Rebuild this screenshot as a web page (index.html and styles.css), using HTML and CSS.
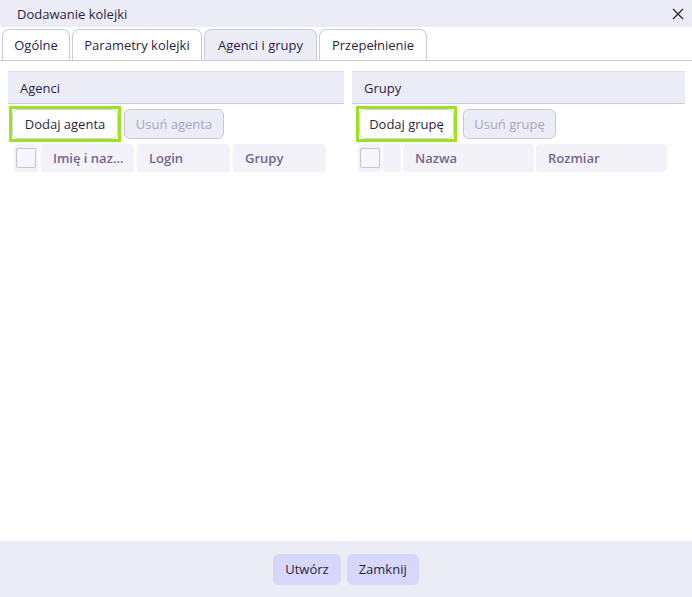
FILE: index.html
```html
<!DOCTYPE html>
<html lang="pl">
<head>
<meta charset="utf-8">
<title>Dodawanie kolejki</title>
<link rel="stylesheet" href="styles.css">
</head>
<body>
<div class="dialog">
  <div class="titlebar">
    <span class="title">Dodawanie kolejki</span>
    <svg class="close" width="12" height="12" viewBox="0 0 12 12"><path d="M1 1L11 11M11 1L1 11" stroke="#2b1f4a" stroke-width="1.3" fill="none"/></svg>
  </div>
  <div class="tabs">
    <div class="tab t1">Ogólne</div>
    <div class="tab t2">Parametry kolejki</div>
    <div class="tab t3 active">Agenci i grupy</div>
    <div class="tab t4">Przepełnienie</div>
  </div>
  <div class="content">
    <div class="panel">
      <div class="panel-header">Agenci</div>
      <div class="actions a-left">
        <span class="hl"><button class="btn primary w-agent">Dodaj agenta</button></span>
        <button class="btn disabled w-uagent">Usuń agenta</button>
      </div>
      <div class="thead left">
        <div class="cell chk"><span class="box"></span></div>
        <div class="cell">Imię i naz...</div>
        <div class="cell">Login</div>
        <div class="cell">Grupy</div>
      </div>
    </div>
    <div class="panel">
      <div class="panel-header">Grupy</div>
      <div class="actions a-right">
        <span class="hl"><button class="btn primary w-group">Dodaj grupę</button></span>
        <button class="btn disabled w-ugroup">Usuń grupę</button>
      </div>
      <div class="thead right">
        <div class="cell chk"><span class="box"></span></div>
        <div class="cell"></div>
        <div class="cell">Nazwa</div>
        <div class="cell">Rozmiar</div>
      </div>
    </div>
  </div>
  <div class="footer">
    <button class="fbtn">Utwórz</button>
    <button class="fbtn">Zamknij</button>
  </div>
</div>
</body>
</html>
```
FILE: styles.css
```css
* { box-sizing: border-box; }
html, body { margin: 0; padding: 0; background: #fff; }
body {
  font-family: "Open Sans", "Noto Sans", sans-serif;
  font-size: 13px;
  color: #2b1f4a;
}
.dialog {
  width: 692px;
  height: 597px;
  display: flex;
  flex-direction: column;
}
.titlebar {
  height: 27px;
  flex: none;
  background: #ececf6;
  display: flex;
  align-items: center;
  justify-content: space-between;
  padding: 0 8px 0 17px;
}
.title { font-size: 13px; }
.close { display: block; }
.tabs {
  flex: none;
  margin-top: 2px;
  height: 32px;
  display: flex;
  align-items: flex-end;
  gap: 2px;
  padding-left: 2px;
  border-bottom: 1px solid #c9c9e0;
}
.tab {
  height: 31px;
  display: flex;
  align-items: center;
  justify-content: center;
  border: 1px solid #c9c9e0;
  border-bottom: none;
  border-radius: 7px 7px 0 0;
  background: #fff;
  white-space: nowrap;
}
.t1 { width: 68px; }
.t2 { width: 130px; }
.t3 { width: 113px; }
.t4 { width: 108px; }
.tab.active { background: #ececf6; }
.content {
  flex: 1;
  display: grid;
  grid-template-columns: 336px 333px;
  column-gap: 8px;
  padding: 10px 0 0 8px;
  align-items: start;
}
.panel-header {
  height: 33px;
  background: #ececf6;
  border-top: 1px solid #dedeee;
  border-bottom: 1px solid #c9c9e0;
  display: flex;
  align-items: center;
  padding-left: 12px;
}
.actions {
  display: flex;
  align-items: center;
  margin-top: 2px;
  height: 36px;
}
.a-left { padding-left: 1px; gap: 3px; }
.a-right { padding-left: 4px; gap: 6px; }
.hl {
  display: flex;
  border: 3px solid #9be31e;
}
.btn {
  font-family: inherit;
  font-size: 13px;
  height: 30px;
  padding: 0;
  border-radius: 6px;
  border: 1px solid #d4d4e4;
  background: #fff;
  color: #2b1f4a;
}
.w-agent { width: 106px; }
.w-uagent { width: 100px; }
.w-group { width: 95px; }
.w-ugroup { width: 93px; }
.btn.disabled {
  background: #ececf6;
  color: #a9a6c2;
  border-color: #c6c6d8;
}
.thead {
  display: grid;
  gap: 3px;
  margin-top: 2px;
  padding-left: 6px;
  height: 28px;
}
.thead.left { grid-template-columns: 24px 93px 93px 93px; }
.thead.right { grid-template-columns: 23px 18px 131px 131px; gap: 2px; }
.cell {
  background: #f2f2f8;
  border-radius: 4px;
  display: flex;
  align-items: center;
  padding-left: 12px;
  font-weight: 600;
  color: #74668f;
  white-space: nowrap;
  overflow: hidden;
}
.cell.chk { padding: 0; justify-content: center; }
.box {
  width: 20px;
  height: 20px;
  border: 1px solid #c3c3da;
  border-radius: 2px;
  background: #f6f6fb;
}
.footer {
  flex: none;
  height: 56px;
  background: #ececf6;
  display: flex;
  align-items: center;
  justify-content: center;
  gap: 6px;
}
.fbtn {
  font-family: inherit;
  font-size: 13px;
  height: 31px;
  padding: 0 12px;
  border: none;
  border-radius: 6px;
  background: #d7d7fb;
  color: #2b1f4a;
}
```
